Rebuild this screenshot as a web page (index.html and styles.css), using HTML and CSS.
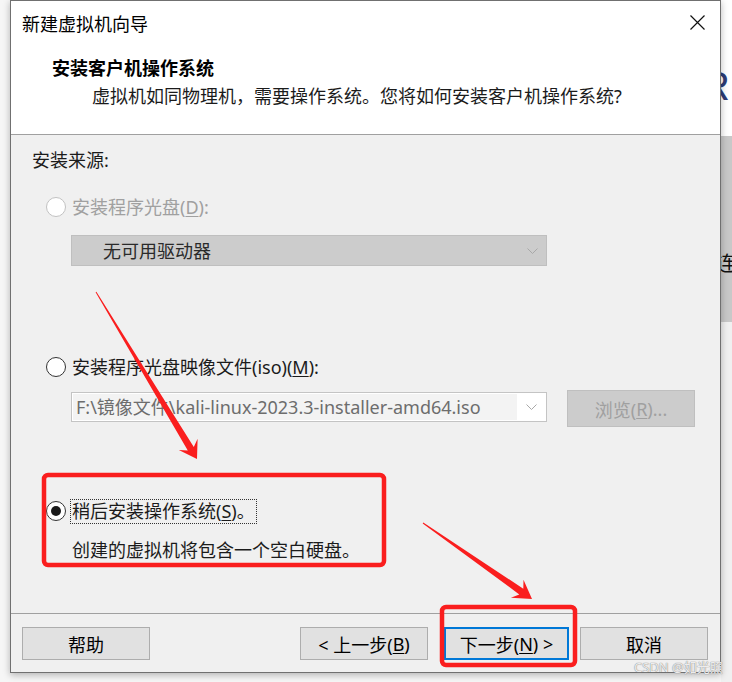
FILE: index.html
```html
<!DOCTYPE html>
<html lang="zh-CN">
<head>
<meta charset="utf-8">
<title>新建虚拟机向导</title>
<link rel="stylesheet" href="styles.css">
</head>
<body>
<div class="screen">
  <div class="gutter"></div>
  <div class="dialog">
    <div class="titlebar">
      <span class="title">新建虚拟机向导</span>
      <svg class="close" width="15" height="15" viewBox="0 0 15 15"><path d="M0.5 0.5L14.5 14.5M14.5 0.5L0.5 14.5" stroke="#111" stroke-width="1.2" fill="none"/></svg>
    </div>
    <div class="header">
      <div class="h-title">安装客户机操作系统</div>
      <div class="h-desc">虚拟机如同物理机，需要操作系统。您将如何安装客户机操作系统?</div>
    </div>
    <div class="body">
      <div class="section-label">安装来源:</div>

      <div class="radio-row disabled row-disc">
        <span class="radio"></span>
        <span class="label">安装程序光盘(<u>D</u>):</span>
      </div>
      <div class="select-disabled">
        <span class="select-text">无可用驱动器</span>
        <svg class="chev" width="11" height="6" viewBox="0 0 11 6"><polyline points="0.5,0.5 5.5,5.5 10.5,0.5" stroke="#a8a8a8" stroke-width="1" fill="none"/></svg>
      </div>

      <div class="radio-row row-iso">
        <span class="radio"></span>
        <span class="label">安装程序光盘映像文件(iso)(<u>M</u>):</span>
      </div>
      <div class="iso-line">
        <div class="combo">
          <span class="combo-text">F:\镜像文件\kali-linux-2023.3-installer-amd64.iso</span>
          <span class="combo-arrow"><svg class="chev" width="11" height="6" viewBox="0 0 11 6"><polyline points="0.5,0.5 5.5,5.5 10.5,0.5" stroke="#a8a8a8" stroke-width="1" fill="none"/></svg></span>
        </div>
        <div class="browse">浏览(<u>R</u>)...</div>
      </div>

      <div class="radio-row row-later">
        <span class="radio checked"></span>
        <span class="label focus">稍后安装操作系统(<u>S</u>)。</span>
      </div>
      <div class="later-desc">创建的虚拟机将包含一个空白硬盘。</div>
    </div>
    <div class="footer">
      <div class="btn btn-help">帮助</div>
      <div class="btn btn-back">&lt; 上一步(<u>B</u>)</div>
      <div class="btn btn-next">下一步(<u>N</u>) &gt;</div>
      <div class="btn btn-cancel">取消</div>
    </div>
  </div>
  <div class="strip">
    <div class="strip-top"><span class="bg-r">R</span></div>
    <div class="strip-mid"><span class="bg-lian">连</span></div>
    <div class="strip-bottom"></div>
  </div>
</div>

<svg class="annot" width="732" height="682" viewBox="0 0 732 682">
  <rect x="44" y="475" width="340" height="90" rx="4" fill="none" stroke="#fa1e1e" stroke-width="4.5"/>
  <rect x="442" y="607" width="133" height="58" rx="4" fill="none" stroke="#fa1e1e" stroke-width="4.5"/>
  <polygon fill="#fa1e1e" points="96.4,291.7 193.8,446.9 197.6,438.8 197,459 178.8,450.1 187.8,450.5 95.6,292.3"/>
  <polygon fill="#fa1e1e" points="423.3,522.6 523.3,588.7 523.5,579.7 532,599 510.9,597.7 519.3,594.4 422.7,523.4"/>
</svg>

<div class="watermark">CSDN @如光照</div>
</body>
</html>
```

FILE: styles.css
```css
* { box-sizing: border-box; }
html, body { margin: 0; padding: 0; }
body {
  width: 732px;
  height: 682px;
  overflow: hidden;
  position: relative;
  background: #f6f6f6;
  font-family: "Noto Sans", "Noto Sans CJK SC", sans-serif;
  font-size: 18px;
  color: #1b1b1b;
}
u { text-decoration: underline; text-underline-offset: 2px; text-decoration-thickness: 1px; }

.screen { display: flex; height: 682px; }
.gutter { width: 10px; flex: none; }

.dialog {
  width: 711px;
  height: 673px;
  flex: none;
  border: 1px solid #707070;
  background: #f0f0f0;
  display: flex;
  flex-direction: column;
  box-shadow: 0 2px 7px rgba(0, 0, 0, 0.28);
  position: relative;
  z-index: 1;
}

.titlebar {
  height: 45px;
  flex: none;
  background: #fff;
  display: flex;
  align-items: center;
  justify-content: space-between;
  padding: 0 15px 0 11px;
}
.title { font-size: 18px; line-height: 24px; color: #000; }
.close { display: block; margin-top: -2px; }

.header {
  height: 89px;
  flex: none;
  background: #fff;
  border-bottom: 1px solid #a0a0a0;
  padding: 10px 0 0 41px;
}
.h-title { font-weight: bold; line-height: 24px; color: #000; }
.h-desc { margin-top: 4px; padding-left: 40px; line-height: 24px; color: #1b1b1b; }

.body {
  height: 478px;
  flex: none;
  padding: 13px 0 0 21px;
}
.section-label { line-height: 24px; }

.radio-row {
  display: flex;
  align-items: center;
  height: 24px;
  padding-left: 14px;
  gap: 6px;
}
.radio {
  width: 20px;
  height: 20px;
  flex: none;
  border-radius: 50%;
  border: 1px solid #333;
  background: #fff;
  display: flex;
  align-items: center;
  justify-content: center;
}
.radio.checked::after {
  content: "";
  width: 10px;
  height: 10px;
  border-radius: 50%;
  background: #1a1a1a;
}
.label { line-height: 24px; white-space: nowrap; }
.disabled .radio { border-color: #c2c2c2; }
.disabled .label { color: #a0a0a0; }

.row-disc { margin-top: 23px; }

.select-disabled {
  margin: 16px 0 0 39px;
  width: 476px;
  height: 31px;
  background: #cccccc;
  border: 1px solid #bfbfbf;
  display: flex;
  align-items: center;
  justify-content: space-between;
  padding: 0 8px 0 31px;
}
.select-text { line-height: 24px; color: #2a2a2a; }
.chev { display: block; }

.row-iso { margin-top: 89px; }

.iso-line {
  margin-top: 11px;
  padding-left: 39px;
  display: flex;
  align-items: flex-start;
}
.combo {
  margin-top: 2px;
  width: 476px;
  height: 30px;
  background: #fff;
  border: 1px solid #c4c4c4;
  padding: 1px;
  display: flex;
}
.combo-text {
  flex: 1;
  background: #f3f3f3;
  padding-left: 3px;
  line-height: 26px;
  color: #6d6d6d;
  white-space: nowrap;
  overflow: hidden;
}
.combo-arrow {
  width: 28px;
  flex: none;
  display: flex;
  align-items: center;
  justify-content: center;
}
.browse {
  margin-left: 20px;
  width: 128px;
  height: 37px;
  background: #cccccc;
  border: 1px solid #bfbfbf;
  color: #a0a0a0;
  display: flex;
  align-items: center;
  justify-content: center;
}

.row-later { margin-top: 72px; gap: 4px; }
.focus { border: 1px dotted #333; padding: 0 1px; line-height: 23px; }
.later-desc { margin-top: 15px; padding-left: 40px; line-height: 24px; }

.footer {
  flex: 1;
  border-top: 1px solid #a0a0a0;
  display: flex;
  align-items: flex-start;
  padding: 13px 12px 0 11px;
}
.btn {
  height: 33px;
  width: 128px;
  background: #e1e1e1;
  border: 1px solid #adadad;
  display: flex;
  align-items: center;
  justify-content: center;
  color: #000;
  white-space: nowrap;
}
.btn-help { margin-right: auto; }
.btn-next { margin-left: 16px; width: 125px; border: 2px solid #0078d7; }
.btn-cancel { margin-left: 11px; }

.strip { width: 11px; flex: none; display: flex; flex-direction: column; overflow: hidden; }
.strip-top { height: 136px; background: #fff; overflow: hidden; padding-top: 66px; }
.bg-r {
  display: block;
  margin-left: -20px;
  font-family: "Liberation Sans", sans-serif;
  font-size: 40px;
  line-height: 40px;
  color: #2d3c76;
}
.strip-mid { height: 186px; background: #c8c8c8; overflow: hidden; padding-top: 116px; }
.bg-lian { display: block; margin-left: -5px; font-size: 20px; line-height: 24px; color: #111; white-space: nowrap; }
.strip-bottom { flex: 1; background: #f0f0f0; }

.annot { position: absolute; left: 0; top: 0; z-index: 2; pointer-events: none; }

.watermark {
  position: absolute;
  left: 634px;
  top: 658px;
  z-index: 3;
  font-size: 13px;
  line-height: 18px;
  color: rgba(255, 255, 255, 0.85);
  text-shadow: 0 0 1px #8a8a8a, 0 0 1px #8a8a8a;
  white-space: nowrap;
}
```
